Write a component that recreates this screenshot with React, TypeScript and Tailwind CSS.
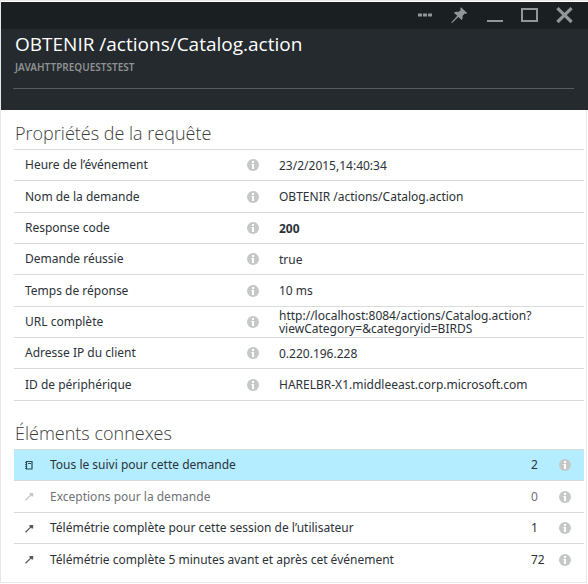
import React from "react";

type Property = { label: string; value: string; strong?: boolean };
type Related = { label: string; count: number; icon: "log" | "arrow"; state?: "selected" | "disabled" };

const properties: Property[] = [
  { label: "Heure de l’événement", value: "23/2/2015,14:40:34" },
  { label: "Nom de la demande", value: "OBTENIR /actions/Catalog.action" },
  { label: "Response code", value: "200", strong: true },
  { label: "Demande réussie", value: "true" },
  { label: "Temps de réponse", value: "10 ms" },
  { label: "URL complète", value: "http://localhost:8084/actions/Catalog.action?viewCategory=&categoryid=BIRDS" },
  { label: "Adresse IP du client", value: "0.220.196.228" },
  { label: "ID de périphérique", value: "HARELBR-X1.middleeast.corp.microsoft.com" },
];

const related: Related[] = [
  { label: "Tous le suivi pour cette demande", count: 2, icon: "log", state: "selected" },
  { label: "Exceptions pour la demande", count: 0, icon: "arrow", state: "disabled" },
  { label: "Télémétrie complète pour cette session de l’utilisateur", count: 1, icon: "arrow" },
  { label: "Télémétrie complète 5 minutes avant et après cet événement", count: 72, icon: "arrow" },
];

function InfoButton() {
  return (
    <button type="button" aria-label="Info" className="block size-3 shrink-0">
      <svg viewBox="0 0 12 12" className="size-3">
        <circle cx="6" cy="6" r="6" fill="#c6c8c8" />
        <path d="M5 2h2v2H5zM4.4 5H7v5H5V6h-.6z" fill="#fff" />
      </svg>
    </button>
  );
}

function LogIcon() {
  return (
    <svg viewBox="0 0 8 10" className="h-[10px] w-2" fill="none" stroke="#2c4a55">
      <path d="M1.5 1.5h5.5v7.5h-5.5z" strokeWidth="1.2" />
      <path d="M3 3.5h3" strokeWidth="1" />
      <path d="M0.5 2v7" strokeWidth="0.8" strokeDasharray="1 1" />
    </svg>
  );
}

function ArrowIcon() {
  return (
    <svg viewBox="0 0 9 9" className="size-[9px]" fill="none">
      <path d="M0.5 8.2L6 2.9" stroke="currentColor" strokeWidth="1.2" />
      <path d="M4.4 0.9H8.2V4.6L6.8 4.4L4.6 2.2z" fill="currentColor" />
    </svg>
  );
}

function TitleBar() {
  return (
    <div className="flex h-[27px] items-center justify-end bg-[#1a1f21] pr-[15px] text-[#929697]">
      <button type="button" aria-label="Plus" className="mr-[18px]">
        <svg viewBox="0 0 15 18" className="h-[18px] w-[15px]" fill="currentColor">
          <path d="M0 6.5h4v3H0zM5 6.5h4v3H5zM10 6.5h4v3h-4z" />
        </svg>
      </button>
      <button type="button" aria-label="Épingler" className="mr-[18px]">
        <svg viewBox="0 0 18 18" className="size-[18px]" fill="currentColor">
          <path d="M10 0.2L16.2 6.1L14.9 7L13.6 6.6L11.5 9C11.8 10.7 11.6 12 10.7 13.1L7.4 10L1 16L0.2 15.5L6.3 8.8L2.8 5.7C4.1 4.6 5.8 4.5 7.3 5L9.8 2.9L9.2 1.5z" />
        </svg>
      </button>
      <button type="button" aria-label="Réduire" className="mr-[18px]">
        <svg viewBox="0 0 16 18" className="h-[18px] w-4" fill="currentColor">
          <path d="M0 13h16v2H0z" />
        </svg>
      </button>
      <button type="button" aria-label="Agrandir" className="mr-[18px]">
        <svg viewBox="0 0 17 18" className="h-[18px] w-[17px]" fill="none" stroke="currentColor" strokeWidth="2">
          <path d="M1 2h15v12H1z" />
        </svg>
      </button>
      <button type="button" aria-label="Fermer">
        <svg viewBox="0 0 17 18" className="h-[18px] w-[17px]" fill="none" stroke="currentColor" strokeWidth="3.2">
          <path d="M1.4 1.2L15.6 15M15.6 1.2L1.4 15" />
        </svg>
      </button>
    </div>
  );
}

const headingClass = "px-px font-['Open_Sans','Noto_Sans',sans-serif] text-lg leading-8 font-light text-[#3c3c3c]";

export default function App() {
  return (
    <div className="border-t border-l border-[#e6e7e7] bg-white pt-px font-['Noto_Sans',sans-serif] text-xs text-[#2c3238]">
      <header className="bg-[#242a2d]">
        <TitleBar />
        <div className="h-[81px] pr-3.5 pl-3">
          <div className="h-[60px] border-b border-[#585b5c] px-0.5">
            <h1 className="font-['Open_Sans','Noto_Sans',sans-serif] text-[19px] leading-[30px] text-white">
              OBTENIR /actions/Catalog.action
            </h1>
            <p className="text-[10px] leading-4 font-semibold text-[#8e9293]">JAVAHTTPREQUESTSTEST</p>
          </div>
        </div>
      </header>

      <main className="mr-px border-r border-b border-[#e6e7e7] pt-[7px] pr-0.5 pb-[7px] pl-[13px]">
        <section className="mb-4">
          <h2 className={headingClass}>Propriétés de la requête</h2>
          <table className="w-full table-fixed border-separate border-spacing-0 border-t border-[#d9dcdd]">
            <tbody>
              {properties.map((p) => (
                <tr key={p.label} className="h-[31px] nth-[3n+2]:h-8">
                  <th scope="row" className="w-[233px] border-b border-[#d9dcdd] p-0 pl-[11px] text-left font-normal">
                    {p.label}
                  </th>
                  <td className="w-8 border-b border-[#d9dcdd] p-0">
                    <InfoButton />
                  </td>
                  <td
                    className={`border-b border-[#d9dcdd] p-0 leading-[13px] break-words ${p.strong ? "font-bold" : ""}`}
                  >
                    {p.value}
                  </td>
                </tr>
              ))}
            </tbody>
          </table>
        </section>

        <section>
          <h2 className={headingClass}>Éléments connexes</h2>
          <ul className="border-t border-[#d9dcdd]">
            {related.map((r) => (
              <li
                key={r.label}
                className={`flex h-[31px] items-center border-b border-[#d9dcdd] pr-[13px] last:border-b-0 nth-[3n+2]:h-8 ${
                  r.state === "selected" ? "bg-[#b3edff]" : ""
                } ${r.state === "disabled" ? "text-[#6f7376]" : ""}`}
              >
                <button type="button" className="flex h-full flex-1 items-center text-left">
                  <span
                    className={`flex w-9 justify-start pl-[11px] ${
                      r.state === "disabled" ? "text-[#c4c6c7]" : "text-[#55595c]"
                    }`}
                  >
                    {r.icon === "log" ? <LogIcon /> : <ArrowIcon />}
                  </span>
                  <span className="flex-1">{r.label}</span>
                  <span className="w-7">{r.count}</span>
                </button>
                <InfoButton />
              </li>
            ))}
          </ul>
        </section>
      </main>
    </div>
  );
}
